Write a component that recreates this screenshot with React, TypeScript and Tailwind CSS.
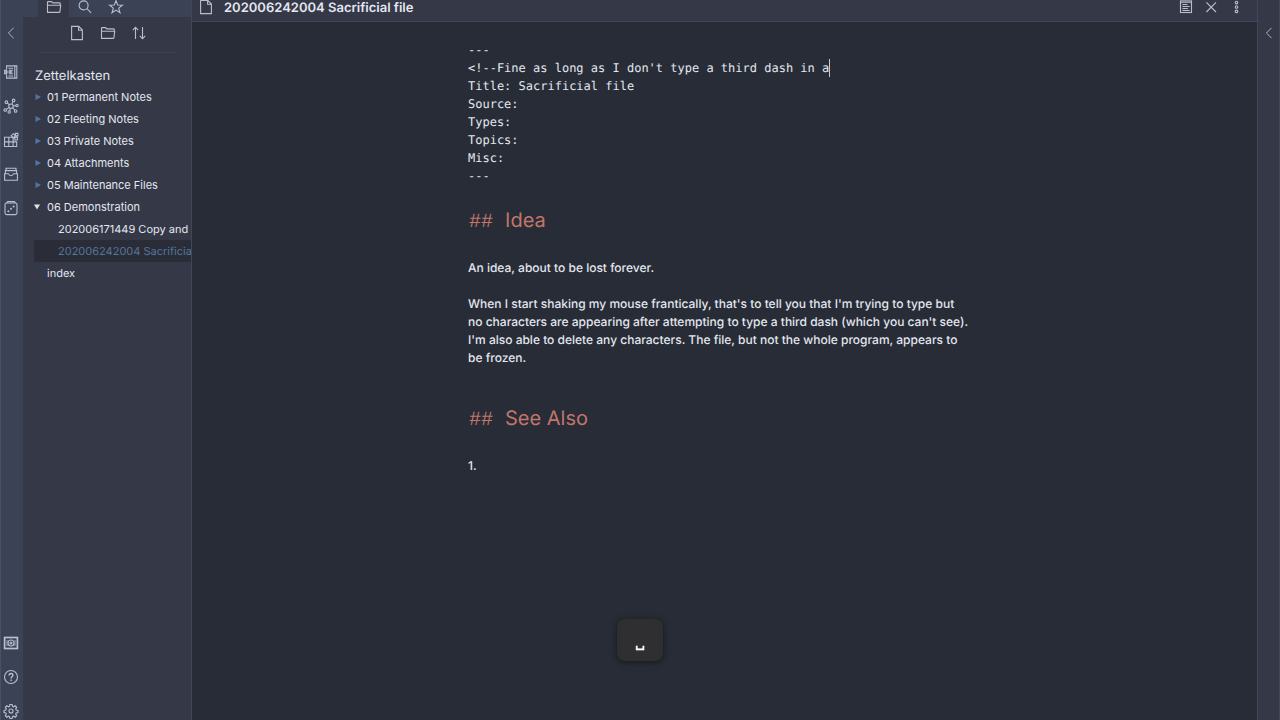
import React from 'react';
import { clsx } from 'clsx';

interface IconProps {
  className?: string;
  children: React.ReactNode;
}

/** Shared 16x16 stroke frame for the outline icons */
const Icon: React.FC<IconProps> = ({ className = 'size-4', children }) => (
  <svg
    viewBox="0 0 16 16"
    fill="none"
    stroke="currentColor"
    strokeWidth="1.1"
    aria-hidden="true"
    className={clsx('shrink-0', className)}
  >
    {children}
  </svg>
);

const FolderIcon = () => (
  <Icon>
    <path d="M1.5 13.4V3.2c0-.4.2-.6.6-.6h3.5l1.2 1.3h6.8c.4 0 .6.2.6.6v1.5M1.5 13.4V6.2h13.2l-.8 6.6c-.1.4-.3.6-.7.6H1.5z" />
  </Icon>
);

const SearchIcon = () => (
  <Icon>
    <circle cx="6.6" cy="6.4" r="4.5" />
    <path d="m9.9 9.7 4.2 4.2" />
  </Icon>
);

const StarIcon = () => (
  <Icon>
    <path d="m8 1.6 1.7 4.4 4.7.2-3.7 2.9 1.3 4.6L8 11.1l-4 2.6 1.3-4.6-3.7-2.9 4.7-.2L8 1.6z" />
  </Icon>
);

const FileIcon = () => (
  <Icon>
    <path d="M2.6 1.4h7.2l3.6 3.6v9.6H2.6V1.4zM9.6 1.6v3.6h3.6" />
  </Icon>
);

const SortIcon = () => (
  <Icon>
    <path d="M4.5 14V2.4M1.8 5.2l2.7-3 2.7 3M11.5 2v11.6M8.8 10.8l2.7 3 2.7-3" />
  </Icon>
);

const ChevronIcon = () => (
  <Icon>
    <path d="M10.6 2.8 5.4 8l5.2 5.2" strokeWidth="0.9" />
  </Icon>
);

const SwitcherIcon = () => (
  <Icon>
    <path d="M3.6 5.6V1.9h10.2v12.2H3.6v-3.7M11.8 1.9v12.2M5.4 4.2h4.6M7.4 6.2H10M7.4 9.8H10M5.4 12h4.6M1.4 8h8M6 5.8 8.4 8 6 10.2M1.6 6.4h2v3.2h-2z" />
  </Icon>
);

const GraphIcon = () => (
  <Icon>
    <circle cx="8" cy="8.2" r="2.2" />
    <circle cx="3.4" cy="4.2" r="1.3" />
    <circle cx="10.6" cy="2.4" r="1.3" />
    <circle cx="14" cy="7.4" r="1.2" />
    <circle cx="2.2" cy="12" r="1.3" />
    <circle cx="6.2" cy="14" r="1.2" />
    <circle cx="12.6" cy="13" r="1.3" />
    <path d="m4.4 5.1 2 1.6M10 3.6 8.9 6.1M10.2 8l2.6-.4M3.4 11.4 6 9.5M7.3 10.3l-.7 2.5M9.6 9.7l2 2.3" />
  </Icon>
);

const BlocksIcon = () => (
  <Icon>
    <path d="M1.5 5.3h8.6v9.2H1.5zM1.5 9.9h12.2v4.6H1.5M5.8 5.3v9.2M10.1 9.9v4.6" />
    <path d="m8.2 3.6 2.3-1.9 1.8 2.2-2.2 2zM12.4 1.4h2.5v2.5h-2.5zM11.6 5.6l2.6-.4.4 2.6-2.6.4z" />
  </Icon>
);

const ArchiveIcon = () => (
  <Icon>
    <path d="M3 4.4V2.2h10v2.2M2.4 7.6v-3h11.2v3M1.6 7.8h3.6c.4 0 .5.2.7.6.4.9 1 1.4 2.1 1.4s1.7-.5 2.1-1.4c.2-.4.3-.6.7-.6h3.6v6.4H1.6z" />
  </Icon>
);

const DiceIcon = () => (
  <Icon>
    <rect x="2" y="3" width="12" height="11.6" rx="1.6" />
    <path d="m3.4 2.9 1.2-1.3h6.8l1.2 1.3" />
    <g fill="currentColor" stroke="none">
      <circle cx="5.4" cy="11.2" r="1" />
      <circle cx="8" cy="8.8" r="1" />
      <circle cx="10.6" cy="6.4" r="1" />
    </g>
  </Icon>
);

const VaultIcon = () => (
  <Icon>
    <rect x="1.6" y="2.5" width="12.8" height="11" strokeWidth="1.7" />
    <circle cx="8" cy="8" r="3" />
    <circle cx="8" cy="8" r="1" />
    <path d="M4 5v6M12 5v6" strokeWidth="0.8" />
  </Icon>
);

const HelpIcon = () => (
  <Icon>
    <circle cx="8" cy="8" r="6.5" />
    <path
      d="M6.1 6.5c0-1.3.8-2 1.9-2s1.9.7 1.9 1.8c0 1.5-1.8 1.5-1.8 3.1M8.1 10.6v1.3"
      strokeWidth="1.4"
    />
  </Icon>
);

const GearIcon = () => (
  <Icon>
    <circle cx="8" cy="8" r="2" />
    <path d="M6.9 1.5h2.2l.4 1.8 1.1.5 1.6-1 1.5 1.5-1 1.6.5 1.1 1.8.4v2.2l-1.8.4-.5 1.1 1 1.6-1.5 1.5-1.6-1-1.1.5-.4 1.8H6.9l-.4-1.8-1.1-.5-1.6 1-1.5-1.5 1-1.6-.5-1.1-1.8-.4V7.4l1.8-.4.5-1.1-1-1.6 1.5-1.5 1.6 1 1.1-.5z" />
  </Icon>
);

const PreviewIcon = () => (
  <Icon>
    <rect x="2.5" y="1.9" width="11" height="11.6" />
    <path d="M2.5 3.3h11M4.4 5.5h5M4.4 7.5h7.2M4.4 9.5h5.4M4.4 11.5h7.2" />
  </Icon>
);

const CloseIcon = () => (
  <Icon>
    <path d="m3.4 3.4 9.6 9.6M13 3.4 3.4 13" />
  </Icon>
);

const MoreIcon = () => (
  <Icon>
    <circle cx="8.5" cy="3.6" r="1.3" />
    <circle cx="8.5" cy="8" r="1.3" />
    <circle cx="8.5" cy="12.4" r="1.3" />
  </Icon>
);

interface IconButtonProps {
  label: string;
  icon: React.ReactNode;
}

const IconButton: React.FC<IconButtonProps> = ({ label, icon }) => (
  <button
    type="button"
    aria-label={label}
    className="flex size-4 shrink-0 items-center justify-center text-[#b9bfce] hover:text-white"
  >
    {icon}
  </button>
);

const folders = [
  '01 Permanent Notes',
  '02 Fleeting Notes',
  '03 Private Notes',
  '04 Attachments',
  '05 Maintenance Files',
];

const openFiles = [
  { name: '202006171449 Copy and Paste', active: false },
  { name: '202006242004 Sacrificial file', active: true },
];

const LeftRibbon = () => (
  <div className="flex w-[23px] shrink-0 flex-col items-center justify-between border-l border-[#4a5165] bg-[#3b4256] pt-[25px] pr-[2px] pb-px">
    <div className="flex flex-col items-center">
      <IconButton label="Collapse sidebar" icon={<ChevronIcon />} />
      <div className="mt-[23px] flex flex-col gap-[18px]">
        <IconButton label="Quick switcher" icon={<SwitcherIcon />} />
        <IconButton label="Graph view" icon={<GraphIcon />} />
        <IconButton label="Blocks" icon={<BlocksIcon />} />
        <IconButton label="Archive" icon={<ArchiveIcon />} />
        <IconButton label="Random note" icon={<DiceIcon />} />
      </div>
    </div>
    <div className="flex flex-col gap-[18px]">
      <IconButton label="Open vault" icon={<VaultIcon />} />
      <IconButton label="Help" icon={<HelpIcon />} />
      <IconButton label="Settings" icon={<GearIcon />} />
    </div>
  </div>
);

const Arrow: React.FC<{ open?: boolean }> = ({ open = false }) => (
  <svg
    viewBox="0 0 6 6"
    aria-hidden="true"
    className={clsx('size-[6px] shrink-0', open ? 'text-[#dfe3ec]' : 'text-[#55759b]')}
  >
    <path d={open ? 'M0 .5h6L3 5.5z' : 'M.5 0v6L6 3z'} fill="currentColor" />
  </svg>
);

const Explorer = () => (
  <nav
    aria-label="Files"
    className="flex flex-col pl-[11px] text-[11px] leading-[22px] text-[#e3e7f0]"
  >
    <h2 className="pt-[2px] pl-px text-[13px] leading-5">Zettelkasten</h2>
    {folders.map((name) => (
      <button key={name} type="button" className="flex items-center gap-[6px] pl-px text-left">
        <Arrow />
        {name}
      </button>
    ))}
    <button type="button" className="flex items-center gap-[7px] text-left">
      <Arrow open />
      06 Demonstration
    </button>
    {openFiles.map((file) => (
      <a
        key={file.name}
        href="#"
        className={clsx(
          'overflow-hidden pl-6 whitespace-nowrap',
          file.active && 'bg-[#2a2d38] text-[#55759b]'
        )}
      >
        {file.name}
      </a>
    ))}
    <a href="#" className="pl-[13px]">
      index
    </a>
  </nav>
);

const Sidebar = () => (
  <aside className="flex w-[169px] shrink-0 flex-col border-r border-[#41465a] bg-[#353847]">
    <div className="flex h-[17px] bg-[#3b4256] pl-[15px]">
      <div className="flex w-[31px] items-center justify-center bg-[#353847] pb-[3px]">
        <IconButton label="File explorer" icon={<FolderIcon />} />
      </div>
      <div className="flex w-[31px] items-center justify-center pb-[3px]">
        <IconButton label="Search" icon={<SearchIcon />} />
      </div>
      <div className="flex w-[31px] items-center justify-center pb-[3px]">
        <IconButton label="Starred" icon={<StarIcon />} />
      </div>
    </div>
    <div className="mr-[15px] mb-[11px] ml-4 flex h-9 items-center justify-center gap-[15px] border-b border-[#3e4253] pb-1">
      <IconButton label="New note" icon={<FileIcon />} />
      <IconButton label="New folder" icon={<FolderIcon />} />
      <IconButton label="Sort order" icon={<SortIcon />} />
    </div>
    <Explorer />
  </aside>
);

const Heading: React.FC<{ children: React.ReactNode }> = ({ children }) => (
  <h2 className="pl-px text-xl leading-[30px] text-[#c0766b]">
    <span className="font-['Liberation_Mono',monospace] whitespace-pre">## </span>
    {children}
  </h2>
);

const frontMatter = ['Title: Sacrificial file', 'Source:', 'Types:', 'Topics:', 'Misc:', '---'];

const Editor = () => (
  <div className="flex-1 overflow-hidden bg-[#282c36] px-6 pt-[19px] text-xs leading-[18px] text-[#e3e7f0]">
    <article className="mx-auto max-w-[513px] pr-[6px]">
      <div className="font-['DejaVu_Sans_Mono',monospace] whitespace-pre">
        <div>---</div>
        <div className="flex">
          {"<!--Fine as long as I don't type a third dash in a"}
          <span className="w-px bg-[#c5cad6]" />
        </div>
        {frontMatter.map((line) => (
          <div key={line}>{line}</div>
        ))}
      </div>
      <div className="mt-5 mb-[21px]">
        <Heading>Idea</Heading>
      </div>
      <p className="font-medium">An idea, about to be lost forever.</p>
      <p className="mt-[18px] font-medium">
        When I start shaking my mouse frantically, that's to tell you that I'm trying to type but
        <br />
        no characters are appearing after attempting to type a third dash (which you can't see).
        <br />
        I'm also able to delete any characters. The file, but not the whole program, appears to
        <br />
        be frozen.
      </p>
      <div className="mt-9 mb-[21px]">
        <Heading>See Also</Heading>
      </div>
      <p className="font-medium">1.</p>
    </article>
  </div>
);

const Pane = () => (
  <main className="flex min-w-0 flex-1 flex-col">
    <header className="flex h-[22px] shrink-0 items-center border-b border-[#41465a] bg-[#353847] pr-[13px] pb-[7px] pl-[6px]">
      <IconButton label="Drag note" icon={<FileIcon />} />
      <h1 className="ml-[10px] flex-1 pt-[2px] text-[13px] leading-[14px] font-semibold text-[#e3e7f0]">
        202006242004 Sacrificial file
      </h1>
      <div className="flex gap-[9px]">
        <IconButton label="Preview" icon={<PreviewIcon />} />
        <IconButton label="Close" icon={<CloseIcon />} />
        <IconButton label="More options" icon={<MoreIcon />} />
      </div>
    </header>
    <Editor />
  </main>
);

const KeyOverlay = () => (
  <div className="absolute bottom-[59px] left-1/2 flex h-[42px] w-[46px] -translate-x-1/2 items-end justify-center rounded-lg bg-[#2f2f31] pb-[10px] font-['DejaVu_Sans',sans-serif] text-sm leading-4 font-bold text-white shadow-[0_1px_6px_rgba(0,0,0,0.5)]">
    ␣
  </div>
);

export default function App() {
  return (
    <div className="relative flex h-screen overflow-hidden bg-[#282c36] font-['Inter',sans-serif] [text-rendering:geometricPrecision]">
      <LeftRibbon />
      <Sidebar />
      <Pane />
      <div className="flex w-[23px] shrink-0 justify-center border-x border-[#41465a] bg-[#353847] pt-[25px]">
        <IconButton label="Expand right sidebar" icon={<ChevronIcon />} />
      </div>
      <KeyOverlay />
    </div>
  );
}
